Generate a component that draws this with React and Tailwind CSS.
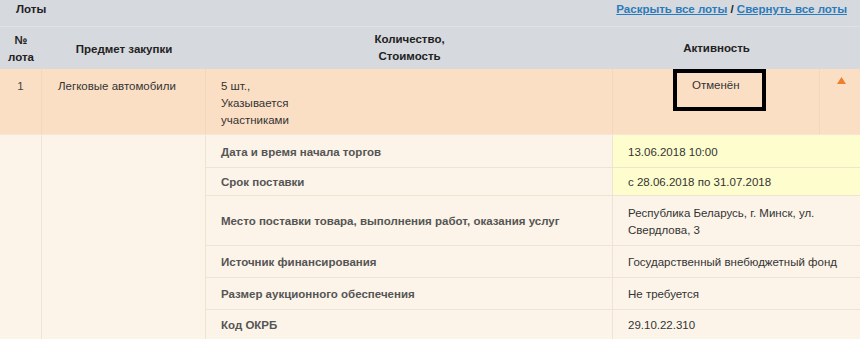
import React from 'react';

// ─── Строки с деталями лота ───────────────────────────────────────────────────
const details = [
    { label: 'Дата и время начала торгов', value: '13.06.2018 10:00', hl: true, h: 'h-[33px]' },
    { label: 'Срок поставки', value: 'с 28.06.2018 по 31.07.2018', hl: true, h: 'h-[28px]' },
    { label: 'Место поставки товара, выполнения работ, оказания услуг', value: ['Республика Беларусь, г. Минск, ул.', 'Свердлова, 3'], h: 'h-[50px]' },
    { label: 'Источник финансирования', value: 'Государственный внебюджетный фонд', h: 'h-[32px]' },
    { label: 'Размер аукционного обеспечения', value: 'Не требуется', h: 'h-[32px]' },
    { label: 'Код ОКРБ', value: '29.10.22.310', h: 'h-[30px]' },
];

const App = () => {
    return (
        <div className="w-[860px] h-[339px] overflow-hidden bg-[#fcf4e8] text-[11.5px] leading-[17px] text-[#333]"
            style={{ fontFamily: '"Liberation Sans", Arial, sans-serif' }}>
            {/* Заголовок */}
            <div className="h-[27px] bg-[#d6d9de] flex items-start justify-between pt-[1px] pl-[16px] pr-[13px] border-b border-[#dfe2e6]">
                <span className="font-bold text-[#222]">Лоты</span>
                <span className="font-bold text-[#222]">
                    <a href="#" className="text-[#2b7bba] underline">Раскрыть все лоты</a>
                    {' / '}
                    <a href="#" className="text-[#2b7bba] underline">Свернуть все лоты</a>
                </span>
            </div>

            {/* Шапка таблицы */}
            <div className="grid grid-cols-[42px_164px_407px_207px_40px] h-[42px] bg-[#d6d9de] font-bold text-[#222] text-center">
                <div className="flex items-center justify-center pt-[2px]">№<br />лота</div>
                <div className="flex items-center justify-center pt-[2px]">Предмет закупки</div>
                <div className="flex items-center justify-center">Количество,<br />Стоимость</div>
                <div className="flex items-center justify-center pt-[1px]">Активность</div>
                <div />
            </div>

            {/* Строка лота */}
            <div className="grid grid-cols-[42px_164px_407px_207px_40px] h-[66px] bg-[#fbdfc5] border-b border-[#f7e6d4]">
                <div className="pt-[9px] text-center text-[#444] border-r border-[#f3d6bb]">1</div>
                <div className="pt-[9px] pl-[16px] border-r border-[#f3d6bb]">Легковые автомобили</div>
                <div className="pt-[9px] pl-[15px] border-r border-[#f3d6bb]">5 шт.,<br />Указывается<br />участниками</div>
                <div className="flex justify-center pl-[7px] border-r border-[#f3d6bb]">
                    <div className="w-[93px] h-[42px] border-[4px] border-black pt-[4px] pl-[15px]">Отменён</div>
                </div>
                <div className="flex justify-center pt-[8px] pl-[2px]">
                    <svg width="9" height="7" viewBox="0 0 9 7"><path d="M4.5 0 L9 7 L0 7 Z" fill="#ee7f2d" /></svg>
                </div>
            </div>

            {/* Детали */}
            <div className="grid grid-cols-[42px_164px_407px_247px]">
                <div className="border-r border-[#f1e3d2]" style={{ gridRow: 'span 6' }} />
                <div className="border-r border-[#f1e3d2]" style={{ gridRow: 'span 6' }} />
                {details.map((d, i) => (
                    <React.Fragment key={i}>
                        <div className={`${d.h} flex items-center pt-[2px] pl-[15px] font-bold text-[#555] border-r border-b border-[#f1e3d2]`}>
                            {d.label}
                        </div>
                        <div className={`${d.h} flex items-center pt-[2px] pl-[15px] border-b border-[#f1e3d2] ${d.hl ? 'bg-[#fefdcd]' : ''}`}>
                            {Array.isArray(d.value)
                                ? <span>{d.value[0]}<br />{d.value[1]}</span>
                                : d.value}
                        </div>
                    </React.Fragment>
                ))}
            </div>
        </div>
    );
};

export default App;
